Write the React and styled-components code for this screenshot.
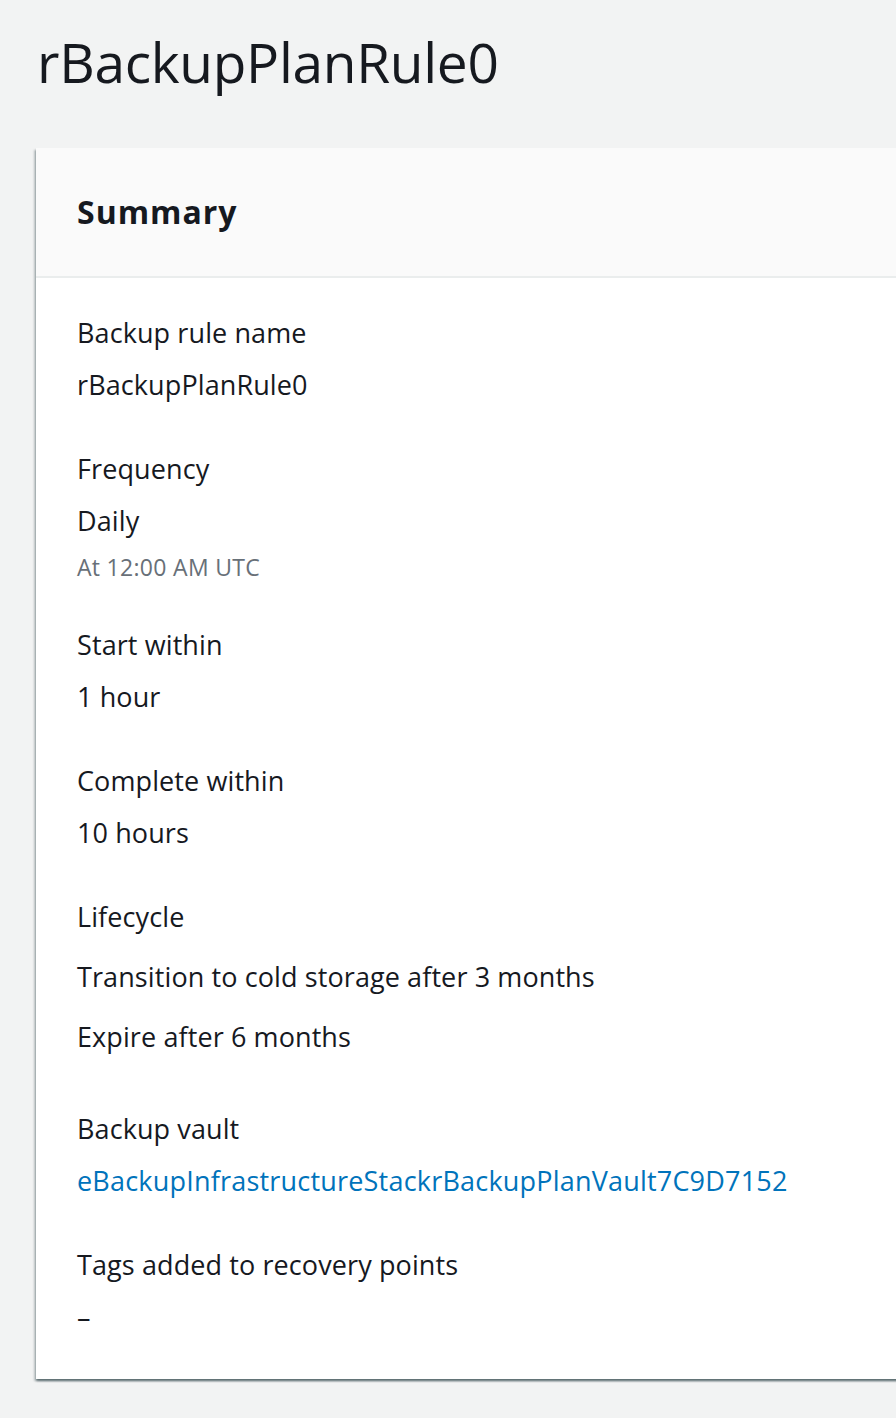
import React from "react"
import styled, { createGlobalStyle } from "styled-components"

const GlobalStyle = createGlobalStyle`
  html, body {
    margin: 0;
    padding: 0;
    background: #f2f3f3;
    overflow: hidden;
  }
  body {
    font-family: "Open Sans", "Noto Sans", sans-serif;
    color: #16191f;
  }
`

const Page = styled.div`
  padding: 22px 0 0 36px;
  min-height: 1418px;
  box-sizing: border-box;
`

const Title = styled.h1`
  margin: 0 0 46px 1px;
  font-size: 55px;
  font-weight: 400;
  line-height: 80px;
  letter-spacing: -0.3px;
`

const Card = styled.section`
  width: 900px;
  background: #fff;
  box-shadow: 0 2px 2px 0 rgba(0, 28, 36, 0.45),
    2px 2px 2px 0 rgba(0, 28, 36, 0.15),
    -2px 2px 2px 0 rgba(0, 28, 36, 0.2);
`

const CardHeader = styled.header`
  background: #fafafa;
  border-bottom: 2px solid #eaeded;
  height: 128px;
  padding: 0 41px;
  display: flex;
  align-items: center;
`

const CardTitle = styled.h2`
  margin: 0;
  font-size: 32px;
  font-weight: 700;
  letter-spacing: 1px;
  line-height: 40px;
`

const CardBody = styled.div`
  padding: 35px 41px 42px;
  display: flex;
  flex-direction: column;
  gap: 44px;
`

const Field = styled.div`
  display: flex;
  flex-direction: column;
  gap: ${(p) => p.$gap || 12}px;
`

const Label = styled.div`
  font-size: 27px;
  line-height: 40px;
  letter-spacing: 0.1px;
`

const Value = styled.div`
  font-size: 27px;
  line-height: 40px;
  letter-spacing: 0.1px;
`

const Sub = styled.div`
  font-size: 23px;
  line-height: 28px;
  color: #687078;
  letter-spacing: 0.3px;
`

const Link = styled.a`
  font-size: 27px;
  line-height: 40px;
  color: #0073bb;
  text-decoration: none;
  letter-spacing: 0.2px;
`

const Lines = styled.div`
  display: flex;
  flex-direction: column;
  gap: 20px;
  margin-bottom: 8px;
`

export default function App() {
  return (
    <Page>
      <GlobalStyle />
      <Title>rBackupPlanRule0</Title>
      <Card>
        <CardHeader>
          <CardTitle>Summary</CardTitle>
        </CardHeader>
        <CardBody>
          <Field>
            <Label>Backup rule name</Label>
            <Value>rBackupPlanRule0</Value>
          </Field>
          <Field>
            <Label>Frequency</Label>
            <Value>Daily</Value>
            <Sub>At 12:00 AM UTC</Sub>
          </Field>
          <Field>
            <Label>Start within</Label>
            <Value>1 hour</Value>
          </Field>
          <Field>
            <Label>Complete within</Label>
            <Value>10 hours</Value>
          </Field>
          <Field $gap={20}>
            <Label>Lifecycle</Label>
            <Lines>
              <Value>Transition to cold storage after 3 months</Value>
              <Value>Expire after 6 months</Value>
            </Lines>
          </Field>
          <Field>
            <Label>Backup vault</Label>
            <Link href="#">eBackupInfrastructureStackrBackupPlanVault7C9D7152</Link>
          </Field>
          <Field>
            <Label>Tags added to recovery points</Label>
            <Value>–</Value>
          </Field>
        </CardBody>
      </Card>
    </Page>
  )
}
